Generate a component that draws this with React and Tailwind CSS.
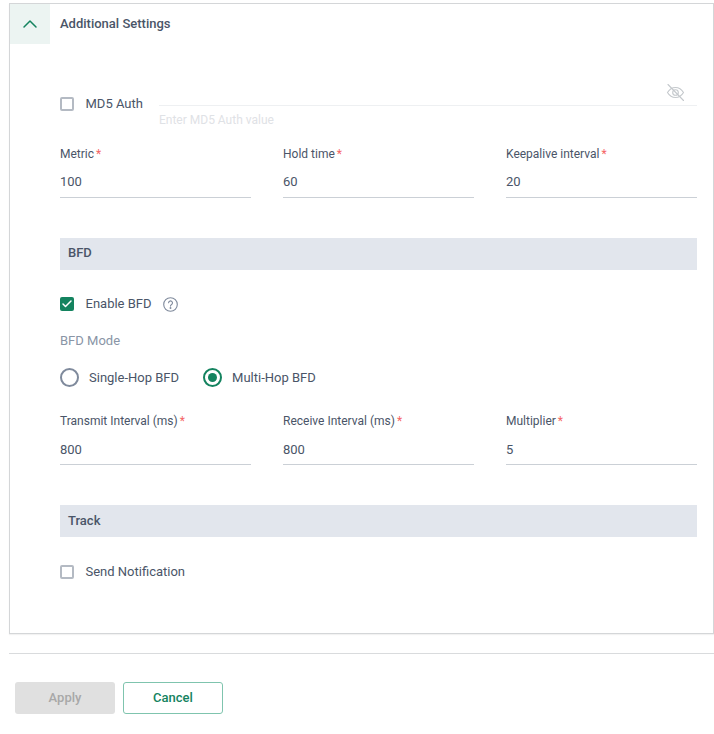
import React from "react";
import { ChevronUp, Check } from "lucide-react";

function Field({ label, value, low }) {
  return (
    <div className="flex flex-col">
      <div className="h-[17px] text-[12px] leading-[17px] text-[#4a5568]">
        {label}
        <span className="ml-[2px] text-[#f56565]">*</span>
      </div>
      <div className={low ? "mt-[10px] h-[20px] text-[13px] leading-[20px] text-[#4a5568]" : "mt-[9px] h-[20px] text-[13px] leading-[20px] text-[#4a5568]"}>{value}</div>
      <div className={low ? "mt-[4px] h-px bg-[#cbd0d6]" : "mt-[5px] h-px bg-[#cbd0d6]"} />
    </div>
  );
}

function CheckBox({ checked, label, children }) {
  return (
    <div className="flex h-[16px] items-center">
      {checked ? (
        <span className="flex h-[14px] w-[14px] items-center justify-center rounded-[2px] bg-[#14835f]">
          <Check size={12} strokeWidth={3} className="text-white" />
        </span>
      ) : (
        <span className="h-[14px] w-[14px] rounded-[2px] border-2 border-[#b4bac3] bg-white" />
      )}
      <span className="ml-[11.5px] text-[13px] leading-[16px] text-[#4a5568]">{label}</span>
      {children}
    </div>
  );
}

function Radio({ checked, label }) {
  return (
    <div className="flex items-center">
      {checked ? (
        <span className="flex h-[19px] w-[19px] items-center justify-center rounded-full border-2 border-[#14835f]">
          <span className="h-[9px] w-[9px] rounded-full bg-[#14835f]" />
        </span>
      ) : (
        <span className="h-[19px] w-[19px] rounded-full border-2 border-[#7f8a9c]" />
      )}
      <span className="ml-[10px] text-[13px] leading-[19px] text-[#4a5568]">{label}</span>
    </div>
  );
}

function SectionBar({ title, low }) {
  return (
    <div className={low ? "flex h-[32px] items-start bg-[#e2e6ed] px-[8px] pt-[7px] text-[13px] font-medium leading-[17px] text-[#4a5568]" : "flex h-[32px] items-start bg-[#e2e6ed] px-[8px] pt-[6px] text-[13px] font-medium leading-[17px] text-[#4a5568]"}>
      {title}
    </div>
  );
}

export default function App() {
  return (
    <div className="h-[734px] w-[714px] overflow-hidden bg-white pt-[3px] font-['Roboto',sans-serif]">
      <div className="ml-[9px] h-[631px] w-[705px] border border-[#d4d6d8] shadow-[0_1px_1px_rgba(0,0,0,0.05)]">
        <div className="flex h-[40px]">
          <div className="flex h-[40px] w-[40px] items-center justify-center bg-[#ecf4f2]">
            <ChevronUp size={24} strokeWidth={1.5} className="text-[#14835f]" />
          </div>
          <div className="ml-[10px] pt-[11px] text-[13px] font-medium leading-[17px] text-[#4a5568]">Additional Settings</div>
        </div>

        <div className="ml-[50px] w-[637px]">
          <div className="mt-[37px] flex">
            <div className="pt-[15px]">
              <div className="w-[99px]">
                <CheckBox label="MD5 Auth" />
              </div>
            </div>
            <div className="flex-1">
              <div className="flex h-[25px] justify-end border-b border-[#eef0f2] pr-[12px] pt-[2px]">
                <svg width="19" height="19" viewBox="0 0 19 19" fill="none" stroke="#c4c8cc" strokeWidth="1.1">
                  <path d="M1.5 9.5C3.5 6.2 6.3 4.5 9.5 4.5s6 1.7 8 5c-2 3.3-4.8 5-8 5s-6-1.7-8-5Z" />
                  <circle cx="9.5" cy="9.5" r="2.8" />
                  <path d="M2 1.5 17.5 17.5" strokeLinecap="round" />
                </svg>
              </div>
              <div className="mt-[6px] text-[12px] leading-[17px] text-[#dfe2e6]">Enter MD5 Auth value</div>
            </div>
          </div>

          <div className="mt-[17px] grid grid-cols-3 gap-x-[32px]">
            <Field label="Metric" value="100" />
            <Field label="Hold time" value="60" />
            <Field label="Keepalive interval" value="20" />
          </div>

          <div className="mt-[40px]">
            <SectionBar title="BFD" />
          </div>

          <div className="mt-[26px]">
            <CheckBox checked label="Enable BFD">
              <svg className="ml-[11px]" width="15" height="15" viewBox="0 0 15 15" fill="none" stroke="#7f8a9c" strokeWidth="1.1">
                <circle cx="7.5" cy="7.5" r="6.8" />
                <path d="M5.6 5.8a1.95 1.95 0 1 1 3 1.7c-.7.45-1.1.8-1.1 1.6" strokeLinecap="round" />
                <circle cx="7.5" cy="11" r=".4" fill="#7f8a9c" />
              </svg>
            </CheckBox>
          </div>

          <div className="mt-[20px] h-[17px] text-[13px] leading-[17px] text-[#8995a6]">BFD Mode</div>

          <div className="mt-[19px] flex gap-[24px]">
            <Radio label="Single-Hop BFD" />
            <Radio checked label="Multi-Hop BFD" />
          </div>

          <div className="mt-[26px] grid grid-cols-3 gap-x-[32px]">
            <Field low label="Transmit Interval (ms)" value="800" />
            <Field low label="Receive Interval (ms)" value="800" />
            <Field low label="Multiplier" value="5" />
          </div>

          <div className="mt-[40px]">
            <SectionBar low title="Track" />
          </div>

          <div className="mt-[27px]">
            <CheckBox label="Send Notification" />
          </div>
        </div>
      </div>

      <div className="ml-[9px] mt-[19px] h-px w-[705px] bg-[#d9dbdd]" />

      <div className="ml-[15px] mt-[28px] flex gap-[8px]">
        <button className="h-[32px] w-[100px] rounded-[3px] bg-[#e0e0e0] text-[13px] font-medium text-[#a8a8a8]">Apply</button>
        <button className="h-[32px] w-[100px] rounded-[3px] border border-[#7fc4ae] bg-white text-[13px] font-medium text-[#14835f]">Cancel</button>
      </div>
    </div>
  );
}
